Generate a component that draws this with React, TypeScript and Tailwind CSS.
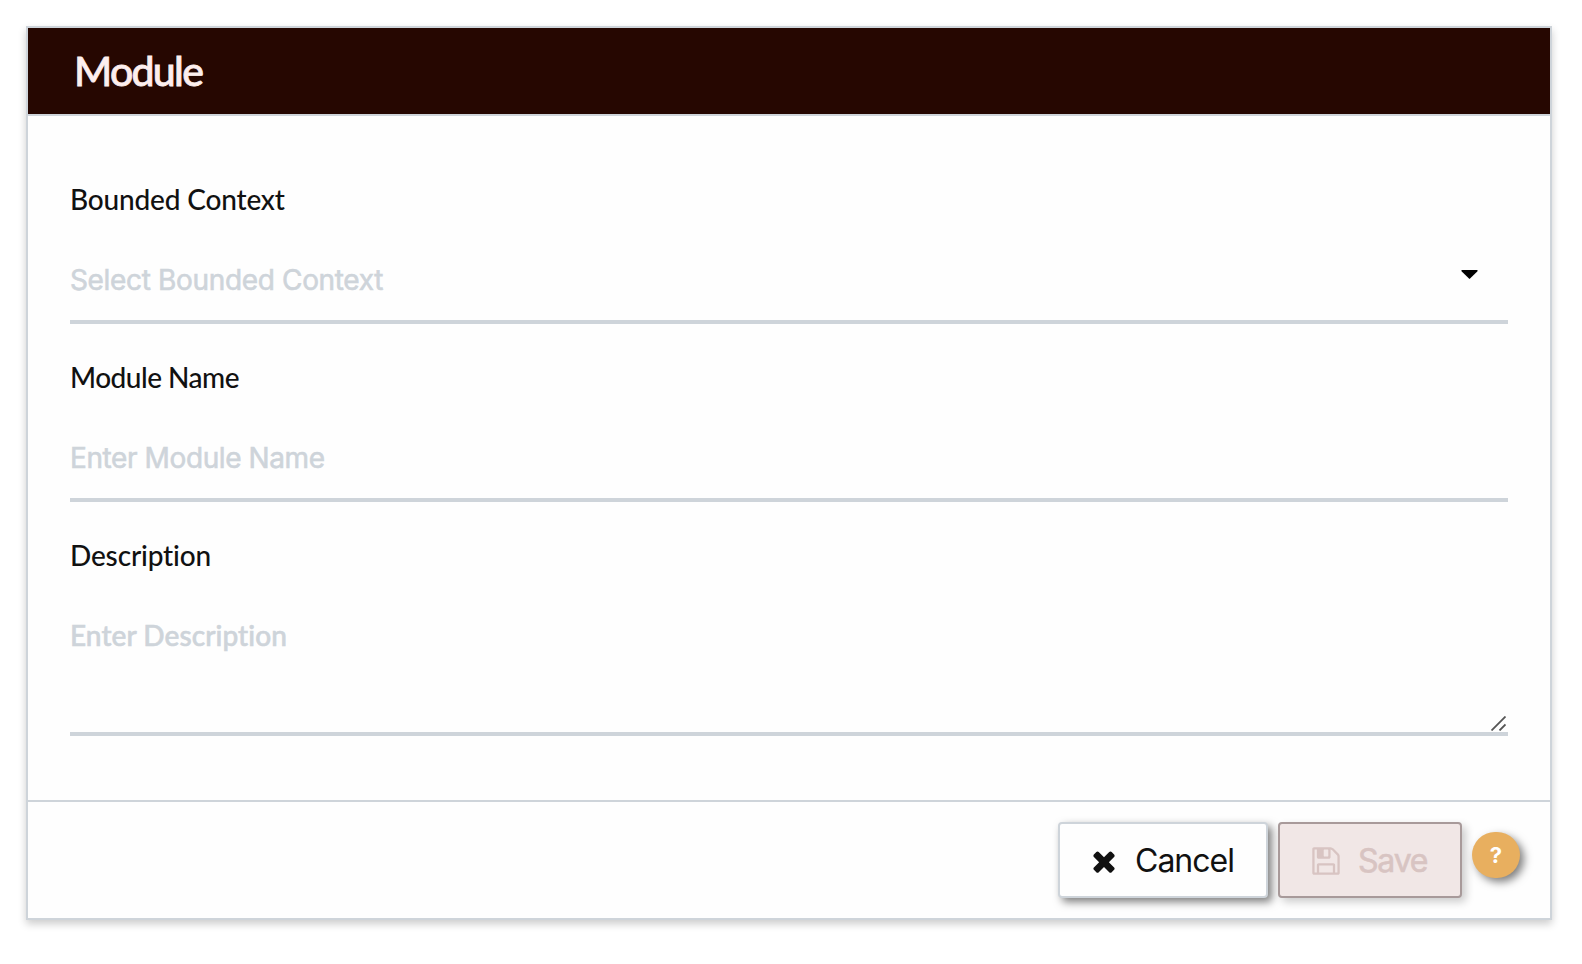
import React from "react";

const labelFont = "font-['Trebuchet_MS','Lato',sans-serif] [font-variant-ligatures:none]";
const uiFont = "font-['Inter',sans-serif]";

function TimesIcon() {
  return (
    <svg className="mt-px h-8 w-8 shrink-0" viewBox="0 0 1792 1792" fill="currentColor" aria-hidden="true">
      <path d="M1490 1322q0 40-28 68l-136 136q-28 28-68 28t-68-28l-294-294-294 294q-28 28-68 28t-68-28l-136-136q-28-28-28-68t28-68l294-294-294-294q-28-28-28-68t28-68l136-136q28-28 68-28t68 28l294 294 294-294q28-28 68-28t68 28l136 136q28 28 28 68t-28 68l-294 294 294 294q28 28 28 68z" />
    </svg>
  );
}

function FloppyIcon() {
  return (
    <svg className="mt-px h-8 w-8 shrink-0" viewBox="0 0 1792 1792" fill="currentColor" aria-hidden="true">
      <path d="M512 1536h768v-384h-768v384zm896 0h128v-896q0-14-10-38.5t-20-34.5l-281-281q-10-10-34-20t-39-10v416q0 40-28 68t-68 28h-576q-40 0-68-28t-28-68v-416h-128v1280h128v-416q0-40 28-68t68-28h832q40 0 68 28t28 68v416zm-384-928v-320q0-13-9.5-22.5t-22.5-9.5h-192q-13 0-22.5 9.5t-9.5 22.5v320q0 13 9.5 22.5t22.5 9.5h192q13 0 22.5-9.5t9.5-22.5zm640 32v928q0 40-28 68t-68 28h-1344q-40 0-68-28t-28-68v-1344q0-40 28-68t68-28h928q40 0 88 20t76 48l280 280q28 28 48 76t20 88z" />
    </svg>
  );
}

function Label({ children }: { children: React.ReactNode }) {
  return (
    <div className={`${labelFont} flex h-10 items-center pb-[2px] text-[28px] font-medium text-[#111]`}>
      {children}
    </div>
  );
}

export default function App() {
  return (
    <div className="h-[964px] w-full bg-white p-[26px] pr-[30px]">
      <section className="flex h-[894px] flex-col border-2 border-[#ced4da] bg-[#fefefe] shadow-[0_4px_8px_rgba(0,0,0,0.2)]">
        <header className="flex h-[88px] items-center border-b-2 border-[#ced4da] bg-[#260701] pb-[2px] pl-[46px]">
          <h1 className={`${labelFont} text-[41px] leading-none font-medium text-[#fdeeee]`}>
            <span className="tracking-[-1.7px] [-webkit-text-stroke:0.8px_#fdeeee]">Module</span>
          </h1>
        </header>

        <main className="flex h-[684px] flex-col px-[42px] pt-16">
          <div className="mb-[34px]">
            <Label><span className="tracking-[-0.17px]">Bounded Context</span></Label>
            <div className="mt-10 flex h-16 items-start justify-between border-b-4 border-[#ced4da]">
              <span className={`${uiFont} text-[28px] leading-10 text-[#ced4da]`}>
                <span className="tracking-[-0.34px] [-webkit-text-stroke:0.6px_#ced4da]">Select Bounded Context</span>
              </span>
              <svg className="mt-[10px] mr-[30px] h-[9px] w-[17px]" viewBox="0 0 17 9" aria-hidden="true">
                <path d="M0.5 0H16.5V1.2L8.5 9L0.5 1.2Z" fill="#000" />
              </svg>
            </div>
          </div>

          <div className="mb-[34px]">
            <Label><span className="tracking-[-0.5px]">Module Name</span></Label>
            <div className="mt-10 h-16 border-b-4 border-[#ced4da]">
              <span className={`${uiFont} text-[28px] leading-10 text-[#ced4da]`}>
                <span className="tracking-[-0.4px] [-webkit-text-stroke:0.6px_#ced4da]">Enter Module Name</span>
              </span>
            </div>
          </div>

          <div>
            <Label><span className="tracking-[-0.15px]">Description</span></Label>
            <div className="mt-10 flex h-[120px] items-start justify-between border-b-4 border-[#ced4da]">
              <span className={`${labelFont} text-[28px] leading-[38px] font-medium text-[#ced4da]`}>
                <span className="tracking-[0.08px] [-webkit-text-stroke:0.6px_#ced4da]">Enter Description</span>
              </span>
              <svg className="mr-[2px] mb-px h-[15px] w-[15px] self-end" viewBox="0 0 15 15" aria-hidden="true">
                <path d="M0.5 14.5L14.5 0.5M8.5 14.5L14.5 8.500" stroke="#555" strokeWidth="1.8" fill="none" />
              </svg>
            </div>
          </div>
        </main>

        <footer className="flex h-[118px] items-start justify-end border-t-2 border-[#ced4da] pt-5 pr-[30px]">
          <button className={`${uiFont} flex h-[76px] w-[210px] items-center rounded border-2 border-[#ced4da] bg-[#fefefe] pl-7 text-[32px] text-[#111] shadow-[4px_4px_8px_rgba(0,0,0,0.5)]`}>
            <TimesIcon />
            <span className="mt-[2px] ml-[15px] tracking-[-1px]">Cancel</span>
          </button>
          <button disabled className={`${uiFont} ml-[10px] flex h-[76px] w-[184px] items-center rounded border-2 border-[#a89a9a] bg-[#f1e7e6] pl-[30px] text-[32px] text-[#d8c4c2] shadow-[4px_4px_8px_rgba(0,0,0,0.2)]`}>
            <FloppyIcon />
            <span className="mt-[2px] ml-[16px] tracking-[-1.2px] [-webkit-text-stroke:0.6px_#d8c4c2]">Save</span>
          </button>
          <button className={`${uiFont} mt-[10px] ml-[10px] flex h-[46px] w-12 items-center justify-center rounded-full bg-[#e8af5f] pt-px text-[22px] font-bold text-white shadow-[4px_4px_8px_rgba(0,0,0,0.5)]`}>
            ?
          </button>
        </footer>
      </section>
    </div>
  );
}
